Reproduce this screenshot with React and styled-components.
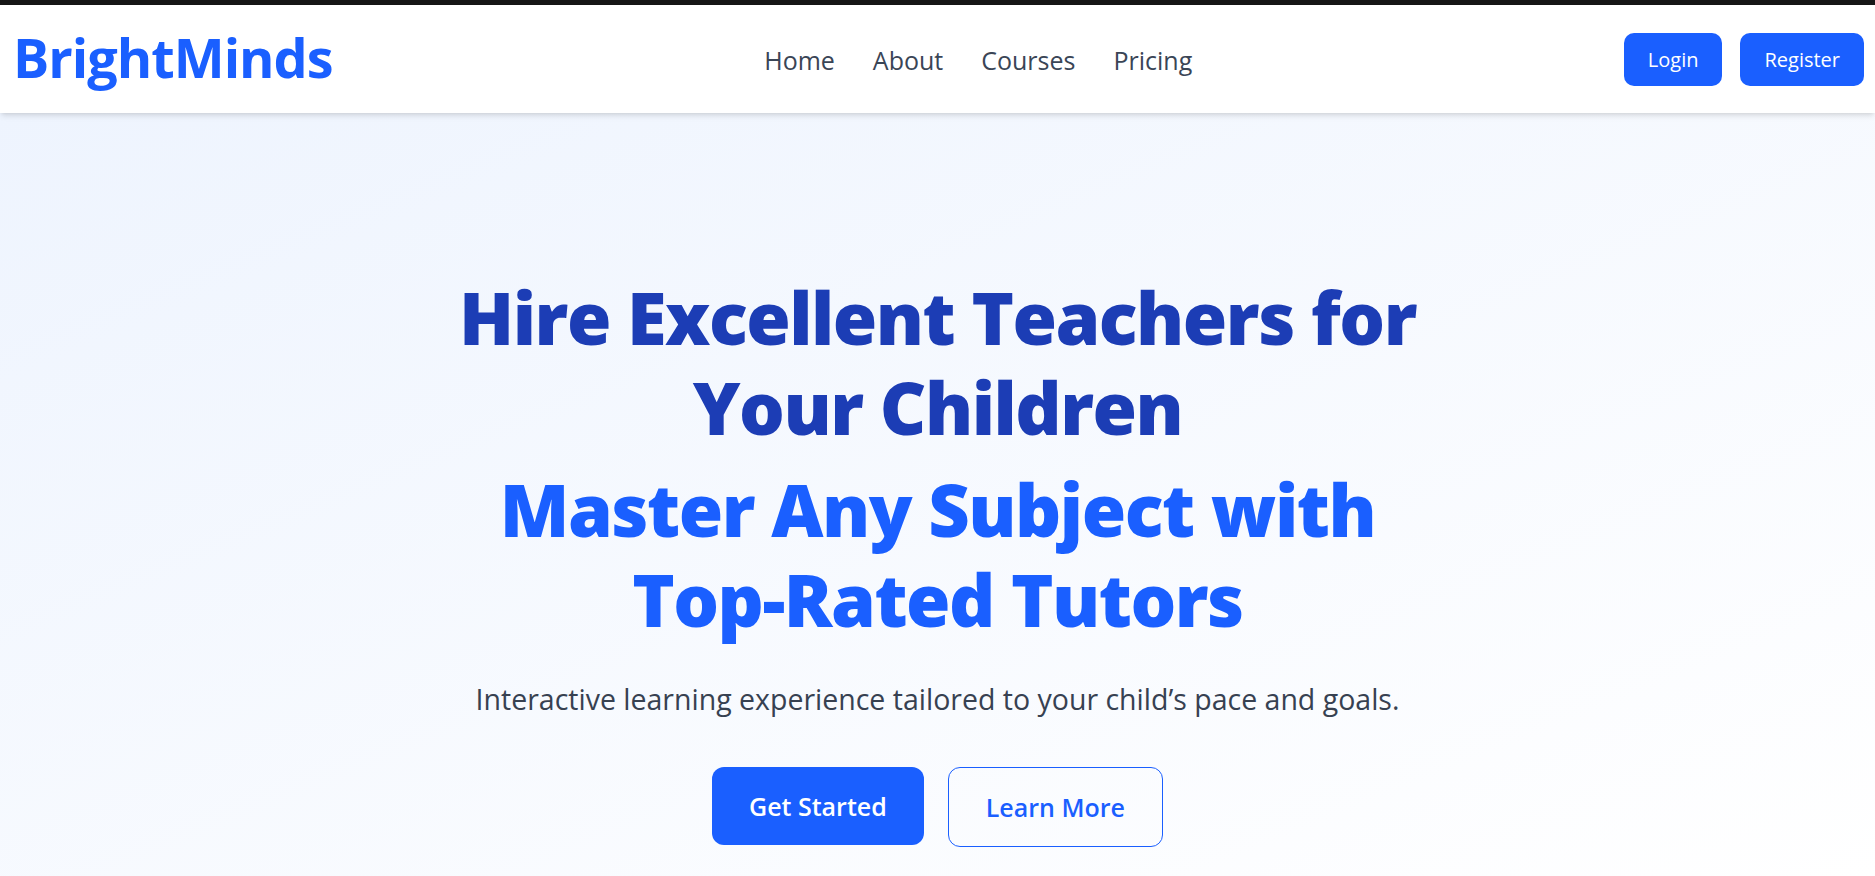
import React from "react";
import styled, { createGlobalStyle } from "styled-components";

const GlobalStyle = createGlobalStyle`
  * { box-sizing: border-box; }
  html, body { margin: 0; padding: 0; }
  body {
    font-family: "Open Sans", "Noto Sans", sans-serif;
    background: #ffffff;
    overflow: hidden;
  }
`;

const Page = styled.div`
  display: flex;
  flex-direction: column;
  min-height: 100vh;
  border-top: 5px solid #161616;
`;

const Header = styled.header`
  position: relative;
  z-index: 2;
  height: 108px;
  display: flex;
  align-items: center;
  justify-content: space-between;
  padding: 0 11px 0 13px;
  background: #ffffff;
  box-shadow: 0 4px 6px -1px rgba(0, 0, 0, 0.1), 0 2px 4px -2px rgba(0, 0, 0, 0.1);
`;

const Logo = styled.a`
  font-size: 54px;
  font-weight: 700;
  letter-spacing: -1px;
  color: #1a5fff;
  text-decoration: none;
  line-height: 1;
  padding-bottom: 4px;
`;

const Nav = styled.nav`
  display: flex;
  align-items: center;
  gap: 38px;
  margin-top: 2px;
`;

const NavLink = styled.a`
  font-size: 25px;
  color: #3a4556;
  text-decoration: none;
`;

const Actions = styled.div`
  display: flex;
  align-items: center;
  gap: 18px;
`;

const NavButton = styled.button`
  height: 53px;
  padding: 0 24px;
  border: none;
  border-radius: 10px;
  background: #1a5fff;
  color: #ffffff;
  font-family: inherit;
  font-size: 20px;
  cursor: pointer;
`;

const Hero = styled.main`
  flex: 1;
  display: flex;
  flex-direction: column;
  align-items: center;
  padding-top: 159px;
  background: linear-gradient(to bottom right, #eef4fe, #ffffff);
  text-align: center;
`;

const Title = styled.h1`
  margin: 0;
  max-width: 1010px;
  font-size: 72px;
  line-height: 90px;
  font-weight: 800;
  letter-spacing: -1.5px;
  color: ${(p) => (p.$accent ? "#1a5fff" : "#1c3db5")};
  margin-top: ${(p) => (p.$accent ? "12px" : "0")};
`;

const Lead = styled.p`
  margin: 34px 0 0;
  font-size: 28.5px;
  line-height: 42px;
  color: #374151;
`;

const ButtonRow = styled.div`
  display: flex;
  align-items: flex-start;
  gap: 24px;
  margin-top: 47px;
`;

const HeroButton = styled.button`
  padding: 20px 37px;
  border-radius: 12px;
  font-family: inherit;
  font-size: 25px;
  line-height: 38px;
  font-weight: 600;
  cursor: pointer;
  background: ${(p) => (p.$outline ? "transparent" : "#1a5fff")};
  color: ${(p) => (p.$outline ? "#1a5fff" : "#ffffff")};
  border: ${(p) => (p.$outline ? "1px solid #1a5fff" : "none")};
`;

export default function App() {
  return (
    <>
      <GlobalStyle />
      <Page>
        <Header>
          <Logo href="#">BrightMinds</Logo>
          <Nav>
            <NavLink href="#">Home</NavLink>
            <NavLink href="#">About</NavLink>
            <NavLink href="#">Courses</NavLink>
            <NavLink href="#">Pricing</NavLink>
          </Nav>
          <Actions>
            <NavButton>Login</NavButton>
            <NavButton>Register</NavButton>
          </Actions>
        </Header>
        <Hero>
          <Title>Hire Excellent Teachers for Your Children</Title>
          <Title as="h2" $accent>
            Master Any Subject with Top-Rated Tutors
          </Title>
          <Lead>Interactive learning experience tailored to your child’s pace and goals.</Lead>
          <ButtonRow>
            <HeroButton>Get Started</HeroButton>
            <HeroButton $outline>Learn More</HeroButton>
          </ButtonRow>
        </Hero>
      </Page>
    </>
  );
}
